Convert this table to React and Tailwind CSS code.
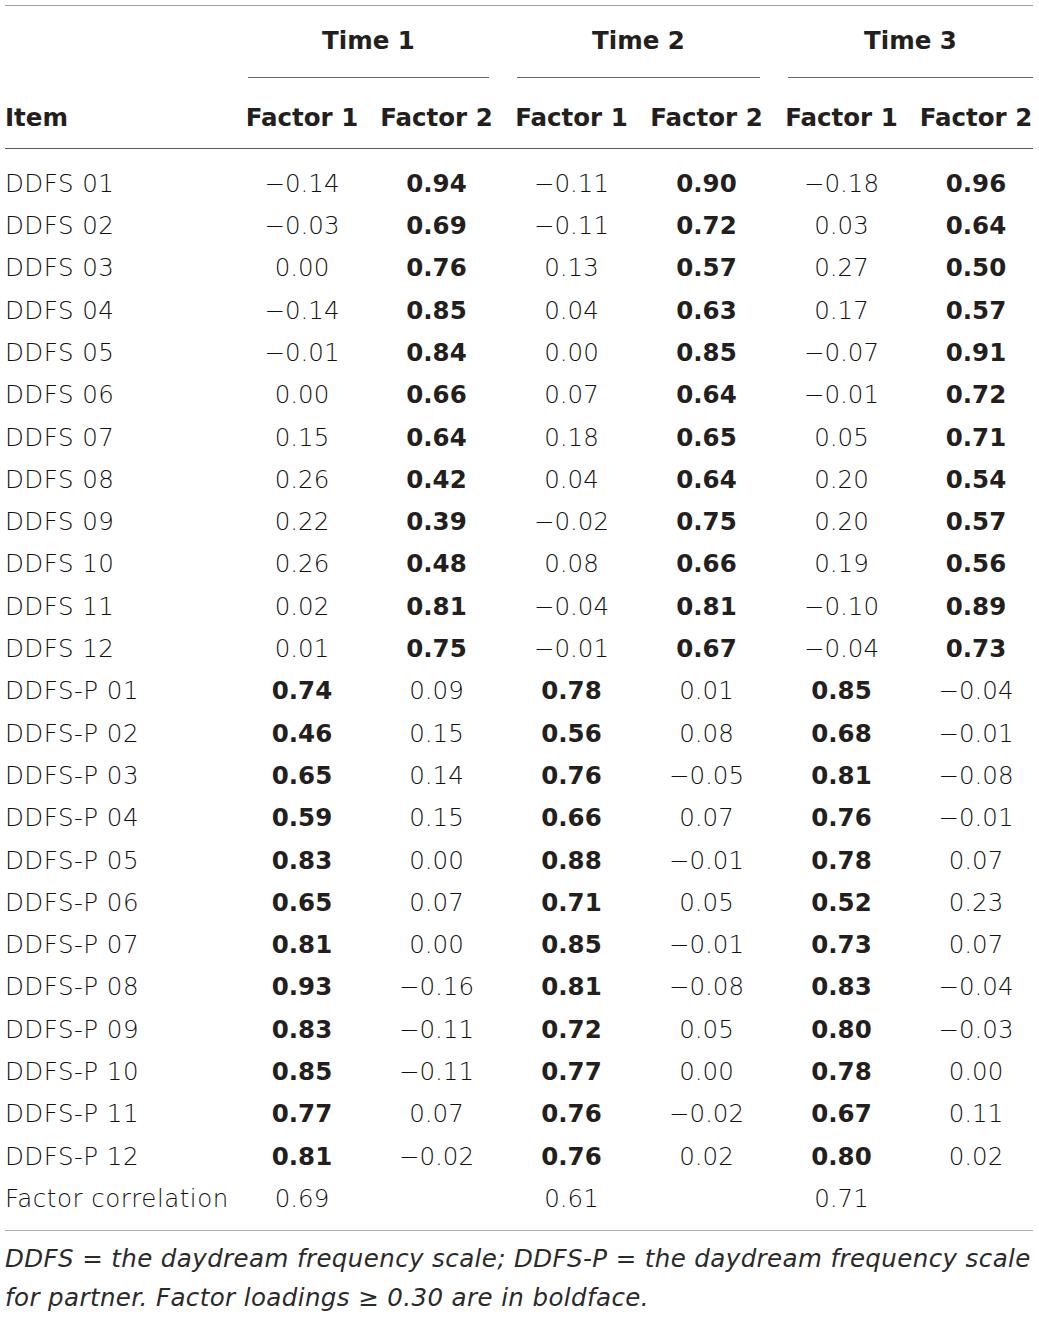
import React from "react";

const rows = [
  ["DDFS 01", ["−0.14", 0], ["0.94", 1], ["−0.11", 0], ["0.90", 1], ["−0.18", 0], ["0.96", 1]],
  ["DDFS 02", ["−0.03", 0], ["0.69", 1], ["−0.11", 0], ["0.72", 1], ["0.03", 0], ["0.64", 1]],
  ["DDFS 03", ["0.00", 0], ["0.76", 1], ["0.13", 0], ["0.57", 1], ["0.27", 0], ["0.50", 1]],
  ["DDFS 04", ["−0.14", 0], ["0.85", 1], ["0.04", 0], ["0.63", 1], ["0.17", 0], ["0.57", 1]],
  ["DDFS 05", ["−0.01", 0], ["0.84", 1], ["0.00", 0], ["0.85", 1], ["−0.07", 0], ["0.91", 1]],
  ["DDFS 06", ["0.00", 0], ["0.66", 1], ["0.07", 0], ["0.64", 1], ["−0.01", 0], ["0.72", 1]],
  ["DDFS 07", ["0.15", 0], ["0.64", 1], ["0.18", 0], ["0.65", 1], ["0.05", 0], ["0.71", 1]],
  ["DDFS 08", ["0.26", 0], ["0.42", 1], ["0.04", 0], ["0.64", 1], ["0.20", 0], ["0.54", 1]],
  ["DDFS 09", ["0.22", 0], ["0.39", 1], ["−0.02", 0], ["0.75", 1], ["0.20", 0], ["0.57", 1]],
  ["DDFS 10", ["0.26", 0], ["0.48", 1], ["0.08", 0], ["0.66", 1], ["0.19", 0], ["0.56", 1]],
  ["DDFS 11", ["0.02", 0], ["0.81", 1], ["−0.04", 0], ["0.81", 1], ["−0.10", 0], ["0.89", 1]],
  ["DDFS 12", ["0.01", 0], ["0.75", 1], ["−0.01", 0], ["0.67", 1], ["−0.04", 0], ["0.73", 1]],
  ["DDFS-P 01", ["0.74", 1], ["0.09", 0], ["0.78", 1], ["0.01", 0], ["0.85", 1], ["−0.04", 0]],
  ["DDFS-P 02", ["0.46", 1], ["0.15", 0], ["0.56", 1], ["0.08", 0], ["0.68", 1], ["−0.01", 0]],
  ["DDFS-P 03", ["0.65", 1], ["0.14", 0], ["0.76", 1], ["−0.05", 0], ["0.81", 1], ["−0.08", 0]],
  ["DDFS-P 04", ["0.59", 1], ["0.15", 0], ["0.66", 1], ["0.07", 0], ["0.76", 1], ["−0.01", 0]],
  ["DDFS-P 05", ["0.83", 1], ["0.00", 0], ["0.88", 1], ["−0.01", 0], ["0.78", 1], ["0.07", 0]],
  ["DDFS-P 06", ["0.65", 1], ["0.07", 0], ["0.71", 1], ["0.05", 0], ["0.52", 1], ["0.23", 0]],
  ["DDFS-P 07", ["0.81", 1], ["0.00", 0], ["0.85", 1], ["−0.01", 0], ["0.73", 1], ["0.07", 0]],
  ["DDFS-P 08", ["0.93", 1], ["−0.16", 0], ["0.81", 1], ["−0.08", 0], ["0.83", 1], ["−0.04", 0]],
  ["DDFS-P 09", ["0.83", 1], ["−0.11", 0], ["0.72", 1], ["0.05", 0], ["0.80", 1], ["−0.03", 0]],
  ["DDFS-P 10", ["0.85", 1], ["−0.11", 0], ["0.77", 1], ["0.00", 0], ["0.78", 1], ["0.00", 0]],
  ["DDFS-P 11", ["0.77", 1], ["0.07", 0], ["0.76", 1], ["−0.02", 0], ["0.67", 1], ["0.11", 0]],
  ["DDFS-P 12", ["0.81", 1], ["−0.02", 0], ["0.76", 1], ["0.02", 0], ["0.80", 1], ["0.02", 0]],
  ["Factor correlation", ["0.69", 0], ["", 0], ["0.61", 0], ["", 0], ["0.71", 0], ["", 0]],
];

const grid = "grid grid-cols-[230px_134px_135px_135px_135px_135px_124px]";

function Cell({ v, b, last }) {
  return (
    <div
      className={
        "flex items-center justify-center whitespace-nowrap " +
        (last ? "ml-[10px] " : "") +
        (b ? "font-bold text-[#231f20]" : "font-extralight text-[#111]")
      }
    >
      {v}
    </div>
  );
}

function Head({ children, last }) {
  return (
    <div className={"flex items-center justify-center whitespace-nowrap " + (last ? "ml-[10px]" : "")}>
      {children}
    </div>
  );
}

export default function App() {
  return (
    <div
      className="bg-white w-[1039px] h-[1317px] pt-[5px] pl-[5px] text-[#231f20]"
      style={{ fontFamily: "'DejaVu Sans', 'Liberation Sans', sans-serif" }}
    >
      <div className="w-[1028px] text-[24.5px]">
        <div className="border-t-[1.5px] border-[#a0a0a0]" />
        <div className={grid + " h-[72px] font-bold"}>
          <div />
          <div className="col-span-2 ml-[13px] mr-[15px] border-b-[1.5px] border-[#6a6a6a] flex items-center justify-center">Time 1</div>
          <div className="col-span-2 ml-[13px] mr-[14px] border-b-[1.5px] border-[#6a6a6a] flex items-center justify-center">Time 2</div>
          <div className="col-span-2 ml-[14px] border-b-[1.5px] border-[#6a6a6a] flex items-center justify-center">Time 3</div>
        </div>
        <div className={grid + " h-[71px] pt-[11px] border-b-[1.5px] border-[#5a5a5a] font-bold"}>
          <div className="flex items-center">Item</div>
          <Head>Factor 1</Head>
          <Head>Factor 2</Head>
          <Head>Factor 1</Head>
          <Head>Factor 2</Head>
          <Head>Factor 1</Head>
          <Head last>Factor 2</Head>
        </div>
        <div className="pt-[14px] pb-[10px] border-b-[1.5px] border-[#b0b0b0]">
          {rows.map((r, i) => (
            <div key={i} className={grid + " h-[42.3px]"}>
              <div className="flex items-center font-extralight text-[#111] whitespace-nowrap tracking-[0.5px]">{r[0]}</div>
              {r.slice(1).map((c, j) => (
                <Cell key={j} v={c[0]} b={c[1]} last={j === 5} />
              ))}
            </div>
          ))}
        </div>
        <div className="pt-[8px] italic font-extralight text-[#2a2a2a] leading-[39px] whitespace-nowrap tracking-[0.4px]">
          DDFS = the daydream frequency scale; DDFS-P = the daydream frequency scale
          <br />
          for partner. Factor loadings ≥ 0.30 are in boldface.
        </div>
      </div>
    </div>
  );
}
